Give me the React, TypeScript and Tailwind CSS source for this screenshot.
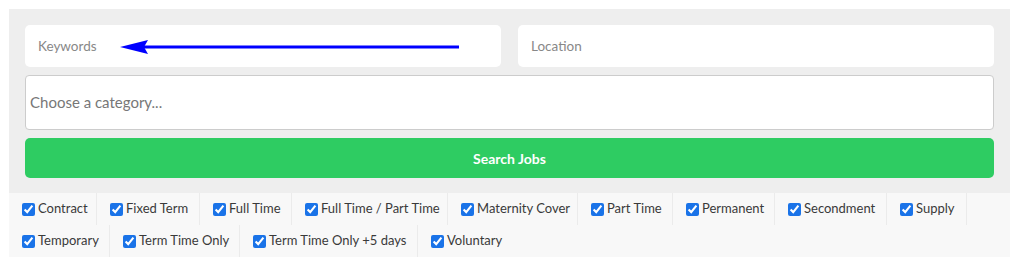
import React from "react";

const row1: [string, string][] = [
  ["Contract", "w-[88px]"],
  ["Fixed Term", "w-[103px]"],
  ["Full Time", "w-[92px]"],
  ["Full Time / Part Time", "w-[156px]"],
  ["Maternity Cover", "w-[130px]"],
  ["Part Time", "w-[95px]"],
  ["Permanent", "w-[102px]"],
  ["Secondment", "w-[112px]"],
  ["Supply", "w-[80px]"],
];
const row2: [string, string][] = [
  ["Temporary", "w-[101px]"],
  ["Term Time Only", "w-[130px]"],
  ["Term Time Only +5 days", "w-[178px]"],
  ["Voluntary", "w-[86px] border-r-0"],
];

const JobType: React.FC<{ label: string; width: string }> = ({ label, width }) => (
  <label className={`flex items-center h-8 pl-[13px] border-r border-[#ebebeb] text-[13px] text-[#3a3a3a] whitespace-nowrap ${width}`}>
    <input type="checkbox" defaultChecked className="w-[13px] h-[13px] m-0 mr-[3px] accent-[#1a73e8]" />
    {label}
  </label>
);

const App: React.FC = () => {
  return (
    <div className="w-[1024px] h-[257px] bg-white pt-[9px] pl-[9px]" style={{ fontFamily: "Lato, 'Open Sans', sans-serif" }}>
      <div className="w-[1001px] bg-[#eeeeee] p-4 pb-[15px] flex flex-col gap-2">
        <div className="flex gap-[17px]">
          <div className="relative flex-1 h-[42px] bg-white rounded-[5px] flex items-center pl-[13px] text-[13.5px] text-[#888]">
            Keywords
            <svg className="absolute left-[95px] top-[14px]" width="340" height="16" viewBox="0 0 340 16">
              <line x1="20" y1="8" x2="339" y2="8" stroke="#0000ff" strokeWidth="3" />
              <polygon points="0,8 28,1 24,8 28,15" fill="#0000ff" />
            </svg>
          </div>
          <div className="flex-1 h-[42px] bg-white rounded-[5px] flex items-center pl-[13px] text-[13.5px] text-[#888]">
            Location
          </div>
        </div>
        <div className="h-[55px] bg-white border border-[#cccccc] rounded-[4px] flex items-center pl-[4px] text-[15px] text-[#777]">
          Choose a category...
        </div>
        <button className="h-10 bg-[#2ecc62] rounded-[5px] text-white text-[14px] font-bold">Search Jobs</button>
      </div>
      <div className="w-[1001px] bg-[#f8f8f8]">
        <div className="flex">
          {row1.map(([l, w]) => (
            <JobType key={l} label={l} width={w} />
          ))}
        </div>
        <div className="flex">
          {row2.map(([l, w]) => (
            <JobType key={l} label={l} width={w} />
          ))}
        </div>
      </div>
    </div>
  );
};

export default App;
